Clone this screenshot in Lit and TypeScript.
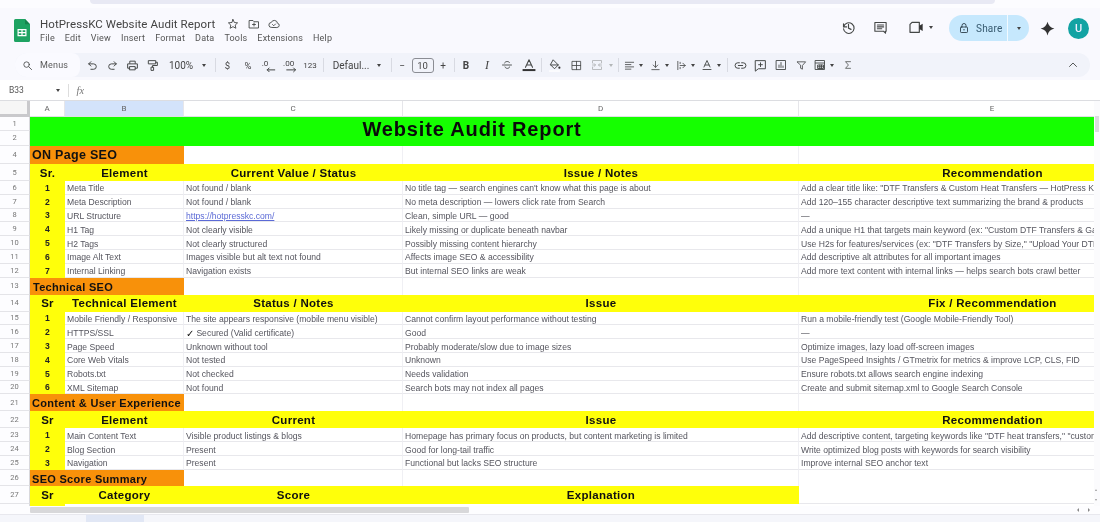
import { LitElement, html, css, svg, nothing } from "lit";
import { customElement } from "lit/decorators.js";

const ic = (body: unknown, size = 14, cls = "") =>
  html`<svg class="ic ${cls}" width=${size} height=${size} viewBox="0 0 24 24">${body}</svg>`;
const p = (d: string) => svg`<path d=${d}></path>`;
const caret = html`<span class="caret"></span>`;
const sep = html`<span class="sep"></span>`;

const icons = {
  search: svg`<circle cx="10" cy="10" r="6"></circle><path d="M15 15l6 6"></path>`,
  undo: p("M9 5L5 9l4 4M5 9h9a5 5 0 0 1 0 10H9"),
  redo: p("M15 5l4 4-4 4M19 9h-9a5 5 0 0 0 0 10h5"),
  print: p("M7 8V4h10v4M7 17H3V9h18v8h-4M7 14h10v6H7z"),
  paint: p("M5 3h13v6H5zM18 6h3v6h-9v3M10 15h4v6h-4z"),
  dec0: svg`<text x="1" y="13" class="svt">.0</text><path d="M22 19H10M13 16l-3 3 3 3" class="th"></path>`,
  dec00: svg`<text x="0" y="13" class="svt">.00</text><path d="M6 19h14M17 16l3 3-3 3" class="th"></path>`,
  strike: svg`<path d="M3 12h18M7 8c1-4 9-4 10-1M8 16c1 4 9 4 9 0"></path>`,
  textA: svg`<path d="M6 16L12 3l6 13M8 12h8"></path><rect x="1" y="19" width="22" height="3.4" class="solid"></rect>`,
  fill: svg`<path d="M10 2l9 9-7 7-7-7zM5 11h14"></path><circle cx="21" cy="16" r="2" class="solid"></circle><rect x="2" y="21" width="20" height="2.4" class="pale"></rect>`,
  borders: p("M3 3h18v18H3zM12 3v18M3 12h18"),
  merge: p("M3 8V3h18v5M3 16v5h18v-5M3 12h6M21 12h-6M6 9l3 3-3 3M18 9l-3 3 3 3"),
  align: p("M3 5h18M3 10h12M3 15h18M3 20h12"),
  valign: p("M4 21h16M12 3v13M7 11l5 5 5-5"),
  wrap: p("M4 3v18M9 12h11M15 7l5 5-5 5M9 5v3M9 16v3"),
  rotate: svg`<path d="M6 16l6-13 6 13M8 12h8M4 21h16"></path>`,
  link: p("M10 7H7a5 5 0 0 0 0 10h3M14 7h3a5 5 0 0 1 0 10h-3M8 12h8"),
  comment: p("M3 3h18v15H8l-5 4zM12 7v7M8.5 10.5h7"),
  chart: p("M3 3h18v18H3zM8 17v-5M12 17V7M16 17v-3"),
  filter: p("M3 4h18l-7 8v8l-4-2v-6z"),
  table: p("M3 3h18v18H3zM3 8h18M8 12h11v7H8zM8 15.5h11M11.5 12v7M15 12v7"),
  sigma: p("M18 4H6l7 8-7 8h12"),
  up: p("M5 15l7-7 7 7"),
  history: svg`<path d="M4 6v5h5M4.3 10.5A8.5 8.5 0 1 1 4 14"></path><path d="M12 7v6l4 2"></path>`,
  chat: p("M3 4h18v14h-1v3l-3-3H3zM7 8h10M7 11h10M7 14h7"),
  video: svg`<path d="M3 8l3-3h11v15H3z"></path><path d="M17 10l5-3v11l-5-3z" class="solid"></path>`,
  lock: svg`<rect x="5" y="10" width="14" height="11" rx="1.5"></rect><path d="M8 10V7a4 4 0 0 1 8 0v3"></path><circle cx="12" cy="15.5" r="1.4" class="solid"></circle>`,
  gemini: svg`<path class="solid" d="M12 1Q14 10 23 12Q14 14 12 23Q10 14 1 12Q10 10 12 1z"></path>`,
  star: p("M12 3l2.7 6 6.5.7-4.8 4.4 1.3 6.4L12 17.3l-5.7 3.2 1.3-6.4-4.8-4.4 6.5-.7z"),
  folder: p("M3 5h7l2 2.5h9V20H3zM12 10v6M9 13h6"),
  cloud: p("M7 19a5 5 0 0 1-.5-10A6.5 6.5 0 0 1 19 10.500a4.300 4.300 0 0 1-.5 8.500zM9 13l2.500 2.500L15 12"),
  fx: svg`<text x="1" y="18" class="fxt">fx</text>`,
};

type Item = [number, number, unknown, string?];
const toolbarItems: Item[] = [
  [92, 16, ic(icons.undo, 13)],
  [112, 16, ic(icons.redo, 13)],
  [132.5, 16, ic(icons.print, 13)],
  [152, 16, ic(icons.paint, 13)],
  [181, 26, "100%", "lbl"],
  [204, 8, caret],
  [215.5, 3, sep],
  [227.5, 14, "$", "sm"],
  [248, 14, "%", "sm"],
  [268, 15, ic(icons.dec0, 15)],
  [290, 15, ic(icons.dec00, 15)],
  [310, 16, "123", "xs"],
  [323, 3, sep],
  [351, 38, "Defaul...", "lbl"],
  [379, 8, caret],
  [391.5, 3, sep],
  [402, 8, "−", "lbl"],
  [422.5, 22, html`<span class="fs">10</span>`],
  [443, 12, "+", "lbl"],
  [454, 3, sep],
  [466, 12, html`<b>B</b>`, "lbl"],
  [487, 12, html`<i class="it">I</i>`, "lbl"],
  [507, 14, ic(icons.strike, 12)],
  [528.500, 15, ic(icons.textA, 14)],
  [541.5, 3, sep],
  [554, 14, ic(icons.fill, 13)],
  [576, 14, ic(icons.borders, 11)],
  [597, 14, ic(icons.merge, 12, "dim")],
  [611, 8, html`<span class="caret dimc"></span>`],
  [618, 3, sep],
  [629, 14, ic(icons.align, 11)],
  [641, 8, caret],
  [655, 14, ic(icons.valign, 11)],
  [667, 8, caret],
  [681, 14, ic(icons.wrap, 11)],
  [693, 8, caret],
  [707, 14, ic(icons.rotate, 12)],
  [719, 8, caret],
  [727.5, 3, sep],
  [740, 14, ic(icons.link, 13)],
  [760, 14, ic(icons.comment, 13)],
  [781, 14, ic(icons.chart, 12)],
  [801, 12, ic(icons.filter, 11)],
  [820, 14, ic(icons.table, 12)],
  [832, 8, caret],
  [848, 12, ic(icons.sigma, 10)],
  [1073, 14, ic(icons.up, 12)],
];

const rightItems: Item[] = [
  [848.5, 16, ic(icons.history, 15)],
  [880, 16, ic(icons.chat, 15)],
  [916, 18, ic(icons.video, 16)],
  [931, 8, caret],
];

// Lays items out in flow, each margin being the distance from the previous item.
const place = (items: Item[], startX: number) => {
  let right = startX;
  return items.map(([cx, w, body, cls]) => {
    const left = cx - w / 2;
    const style = `margin-left:${left - right}px;width:${w}px`;
    right = left + w;
    return html`<span class="slot ${cls ?? ""}" style=${style}>${body}</span>`;
  });
};

type Row =
  | { t: "title"; n: number; text: string }
  | { t: "blank"; n: number }
  | { t: "sec"; n: number; text: string; cls: string }
  | { t: "head"; n: number; cells: string[]; noE?: boolean }
  | { t: "data"; n: number; cells: string[]; link?: boolean };

const d = (n: number, cells: string[], link = false): Row => ({ t: "data", n, cells, link });
const h = (n: number, cells: string[], noE = false): Row => ({ t: "head", n, cells, noE });

const rows: Row[] = [
  { t: "title", n: 1, text: "Website Audit Report" },
  { t: "blank", n: 2 },
  { t: "sec", n: 4, text: "ON Page SEO", cls: "s-on" },
  h(5, ["Sr.", "Element", "Current Value / Status", "Issue / Notes", "Recommendation"]),
  d(6, ["1", "Meta Title", "Not found / blank", "No title tag — search engines can't know what this page is about", 'Add a clear title like: "DTF Transfers & Custom Heat Transfers — HotPress KC"']),
  d(7, ["2", "Meta Description", "Not found / blank", "No meta description — lowers click rate from Search", "Add 120–155 character descriptive text summarizing the brand & products"]),
  d(8, ["3", "URL Structure", "https://hotpresskc.com/", "Clean, simple URL — good", "—"], true),
  d(9, ["4", "H1 Tag", "Not clearly visible", "Likely missing or duplicate beneath navbar", 'Add a unique H1 that targets main keyword (ex: "Custom DTF Transfers & Gang Sheets")']),
  d(10, ["5", "H2 Tags", "Not clearly structured", "Possibly missing content hierarchy", 'Use H2s for features/services (ex: "DTF Transfers by Size," "Upload Your DTF Design")']),
  d(11, ["6", "Image Alt Text", "Images visible but alt text not found", "Affects image SEO & accessibility", "Add descriptive alt attributes for all important images"]),
  d(12, ["7", "Internal Linking", "Navigation exists", "But internal SEO links are weak", "Add more text content with internal links — helps search bots crawl better"]),
  { t: "sec", n: 13, text: "Technical SEO", cls: "s-tech" },
  h(14, ["Sr", "Technical Element", "Status / Notes", "Issue", "Fix / Recommendation"]),
  d(15, ["1", "Mobile Friendly / Responsive", "The site appears responsive (mobile menu visible)", "Cannot confirm layout performance without testing", "Run a mobile-friendly test (Google Mobile-Friendly Tool)"]),
  d(16, ["2", "HTTPS/SSL", "✓ Secured (Valid certificate)", "Good", "—"]),
  d(17, ["3", "Page Speed", "Unknown without tool", "Probably moderate/slow due to image sizes", "Optimize images, lazy load off-screen images"]),
  d(18, ["4", "Core Web Vitals", "Not tested", "Unknown", "Use PageSpeed Insights / GTmetrix for metrics & improve LCP, CLS, FID"]),
  d(19, ["5", "Robots.txt", "Not checked", "Needs validation", "Ensure robots.txt allows search engine indexing"]),
  d(20, ["6", "XML Sitemap", "Not found", "Search bots may not index all pages", "Create and submit sitemap.xml to Google Search Console"]),
  { t: "sec", n: 21, text: "Content & User Experience", cls: "s-con" },
  h(22, ["Sr", "Element", "Current", "Issue", "Recommendation"]),
  d(23, ["1", "Main Content Text", "Visible product listings & blogs", "Homepage has primary focus on products, but content marketing is limited", 'Add descriptive content, targeting keywords like "DTF heat transfers," "custom transfers"']),
  d(24, ["2", "Blog Section", "Present", "Good for long-tail traffic", "Write optimized blog posts with keywords for search visibility"]),
  d(25, ["3", "Navigation", "Present", "Functional but lacks SEO structure", "Improve internal SEO anchor text"]),
  { t: "sec", n: 26, text: "SEO Score Summary", cls: "s-score" },
  h(27, ["Sr", "Category", "Score", "Explanation"], true),
];

@customElement("app-root")
export class AppRoot extends LitElement {
  static styles = css`
    :host { display: block; width: 1100px; height: 522px; overflow: hidden; position: relative; background: #fff; font-family: "Liberation Sans", Arial, sans-serif; filter: blur(0.3px); }
    .ic { fill: none; stroke: #444746; stroke-width: 1.8; stroke-linecap: round; stroke-linejoin: round; display: block; }
    .ic .solid { fill: #333; stroke: none; }
    .ic .pale { fill: #fff; stroke: none; }
    .ic .th { stroke-width: 1.6; }
    .ic .svt { font: 13px Roboto, sans-serif; fill: #444; stroke: none; }
    .ic .fxt { font: italic 19px "Liberation Serif", serif; fill: #777; stroke: none; }
    .ic.dim { stroke: #b3b6b8; }

    .strip { height: 8px; background: #fcfcff; padding-left: 90px; box-sizing: border-box; }
    .strip i { display: block; width: 905px; height: 4px; background: #e8e9f4; border-radius: 0 0 8px 8px; }

    .top { height: 45px; background: #f9f9fe; display: flex; align-items: flex-start; padding-left: 14px; box-sizing: border-box; position: relative; }
    .logo { margin-top: 11px; display: block; }
    .titles { margin-left: 10px; font-family: Roboto, sans-serif; color: #444; }
    .doc { display: flex; align-items: center; height: 16px; margin-top: 8px; font-size: 11.500px; letter-spacing: .08px; color: #444; }
    .doc .ic { margin-left: 8.500px; }
    .doc .ic:first-of-type { margin-left: 12px; }
    .menu { display: flex; font-size: 9px; height: 13px; line-height: 13px; color: #555; gap: 10px; letter-spacing: .18px; }
    .right { display: flex; align-items: center; position: absolute; left: 0; top: 8px; height: 22px; }

    .slot { display: flex; align-items: center; justify-content: center; flex: none; color: #444; }
    .lbl { font: 10px Roboto, sans-serif; white-space: nowrap; }
    .sm { font: 9.5px Roboto, sans-serif; }
    .xs { font: 8px Roboto, sans-serif; }
    .it { font-family: "Liberation Serif", serif; font-size: 12px; }
    .caret { width: 0; height: 0; border: 2.5px solid transparent; border-top: 3px solid #444; border-bottom: 0; }
    .dimc { border-top-color: #b3b6b8; }
    .sep { width: 1px; height: 14px; background: #d8dae2; }
    .fs { width: 22px; height: 15px; box-sizing: border-box; border: 1px solid #8b8d94; border-radius: 3px; font: 9.5px/13px Roboto, sans-serif; text-align: center; color: #444; }

    .share { position: absolute; left: 949px; top: 7px; width: 80px; height: 26px; border-radius: 13px; background: #c6e8fd; display: flex; align-items: center; font: 10px Roboto, sans-serif; color: #375a70; letter-spacing: .2px; }
    .share .ic { margin: 0 6px 0 9px; stroke: #2c3e4b; }
    .share .ic .solid { fill: #2c3e4b; }
    .share .div { width: 1px; height: 26px; background: #f2faff; margin-left: 5px; }
    .share .caret { margin-left: 9px; }
    .gem { position: absolute; left: 1040px; top: 13px; }
    .avatar { position: absolute; left: 1068px; top: 10px; width: 21px; height: 21px; border-radius: 50%; background: #12a3a3; color: #eef; font: 500 11px/21px Roboto, sans-serif; text-align: center; }

    .toolwrap { height: 27px; background: #f9f9fe; }
    .toolbar { width: 1075px; height: 24px; margin-left: 15px; background: #f1f3fa; border-radius: 12px; display: flex; align-items: center; position: relative; }
    .menus { width: 65px; height: 24px; flex: none; background: #fafaff; border-radius: 12px 8px 8px 12px; display: flex; align-items: center; padding-left: 7px; box-sizing: border-box; gap: 7px; font: 9px Roboto, sans-serif; color: #5a5a5a; letter-spacing: .2px; }

    .formula { height: 20px; background: #fff; border-bottom: 1px solid #dcdde1; display: flex; align-items: center; box-sizing: content-box; font: 8.5px Roboto, sans-serif; color: #555; padding-left: 9px; }
    .formula .nm { width: 47px; }
    .formula .vl { width: 1px; height: 13px; background: #ddd; margin: 0 7px 0 8px; }

    .body { display: flex; height: 405px; }
    .sheet { width: 1094px; flex: none; height: 405px; overflow: hidden; }
    .grid { display: grid; width: 1186px; grid-template-columns: 30px 35px 119px 219px 396px 387px; grid-template-rows: 15.5px 14.5px 14.5px 18.5px 17px repeat(7, 13.8px) 17px 17px repeat(6, 13.8px) 17px 17px repeat(3, 13.8px) 16.5px 18px 4px; }
    .ch { display: flex; align-items: center; justify-content: center; font: 8px Roboto, sans-serif; color: #666; border-right: 1px solid #e6e6ea; border-bottom: 1px solid #e0e0e4; box-sizing: border-box; overflow: hidden; }
    .corner { background: #f6f6f6; border-right: 3px solid #c9c9cc; border-bottom: 3px solid #c9c9cc; box-sizing: border-box; }
    .ch.sel { background: #d3e3fb; }
    .rn { display: flex; align-items: center; justify-content: center; font: 7.5px Roboto, sans-serif; color: #777; background: #fdfdff; border-bottom: 1px solid #e4e4e8; border-right: 1px solid #d8d8dc; box-sizing: border-box; overflow: hidden; }
    .c { font-size: 8.600px; line-height: 9px; color: #55555e; white-space: nowrap; overflow: hidden; padding: 3px 2px 0 2px; border-right: 1px solid #f0f0f4; border-bottom: 1px solid #e8e8ec; box-sizing: border-box; display: flex; align-items: center; }
    .c a { color: #5b6ad6; text-decoration: underline; }
    .chk { color: #111; font-size: 9.5px; }
    .num { background: #ffff0a; color: #222; font-weight: 700; justify-content: center; border-right: none; border-bottom: none; padding: 1px 0 0; }
    .yl { background: #ffff0a; color: #111; font-weight: 700; font-size: 11.500px; line-height: 13px; letter-spacing: .28px; justify-content: center; border: none; padding: 1px 0 0; }
    .title { grid-column: span 5; grid-row: span 2; background: #15ff00; color: #0a0a0a; font-weight: 700; font-size: 20px; line-height: 24px; letter-spacing: .85px; justify-content: center; border: none; padding: 0 272px 4px 0; }
    .sec { grid-column: span 2; background: #f8910a; color: #111; font-weight: 700; line-height: 14px; border: none; padding: 1px 0 0 2px; }
    .s-on { font-size: 12.500px; letter-spacing: .3px; }
    .s-tech { font-size: 11px; letter-spacing: .3px; padding-left: 3px; }
    .s-con { font-size: 11px; letter-spacing: .28px; }
    .s-score { font-size: 11px; letter-spacing: .3px; }
    .blank { border-bottom: none; }
    .stub { background: #ffff0a; }

    .vbar { width: 6px; height: 405px; background: #fbfbfd; position: relative; }
    .vbar i { display: block; width: 4px; height: 16px; margin: 15px 0 0 1px; background: #dadce0; }
    .vbar b { position: absolute; left: 1px; width: 0; height: 0; border: 1.500px solid transparent; }
    .vbar .a1 { top: 388px; border-bottom: 2px solid #999; border-top: 0; }
    .vbar .a2 { top: 398px; border-top: 2px solid #999; border-bottom: 0; }

    .hbar { height: 8px; background: #fdfdff; padding-left: 30px; position: relative; border-bottom: 1px solid #e8e8ee; box-sizing: content-box; }
    .hbar i { display: block; width: 439px; height: 6px; position: relative; top: 1px; background: #d8d8da; border-radius: 1px; }
    .hbar b { position: absolute; top: 2px; width: 0; height: 0; border: 2px solid transparent; }
    .hbar .l { left: 1077px; border-right: 2.500px solid #888; border-left: 0; }
    .hbar .r { left: 1088px; border-left: 2.500px solid #888; border-right: 0; }
    .foot { height: 8px; background: #f5f6fb; padding-left: 86px; }
    .foot i { display: block; width: 58px; height: 8px; background: #e1e7f5; }
  `;

  private dataCell(text: string, isLink: boolean) {
    if (isLink) return html`<div class="c"><a>${text}</a></div>`;
    if (text.startsWith("✓ ")) {
      return html`<div class="c"><span class="chk">✓</span>&nbsp;${text.slice(2)}</div>`;
    }
    return html`<div class="c">${text}</div>`;
  }

  private renderRow(r: Row) {
    const rn = html`<div class="rn">${r.n}</div>`;
    if (r.t === "title") return html`${rn}<div class="c title">${r.text}</div>`;
    if (r.t === "blank") return rn;
    if (r.t === "sec") {
      return html`${rn}<div class="c sec ${r.cls}">${r.text}</div>
        <div class="c blank"></div><div class="c blank"></div><div class="c blank"></div>`;
    }
    if (r.t === "head") {
      return html`${rn}${r.cells.map((c) => html`<div class="c yl">${c}</div>`)}
        ${r.noE ? html`<div class="c"></div>` : nothing}`;
    }
    return html`${rn}<div class="c num">${r.cells[0]}</div>
      ${r.cells.slice(1).map((c, i) => this.dataCell(c, !!r.link && i === 1))}`;
  }

  render() {
    return html`
      <div class="strip"><i></i></div>
      <div class="top">
        <svg class="logo" width="16" height="23" viewBox="0 0 16 22" preserveAspectRatio="none">
          <path fill="#1ea362" d="M1.500 0H11l5 5v15.500a1.500 1.500 0 0 1-1.500 1.500h-13A1.500 1.500 0 0 1 0 20.500v-19A1.500 1.500 0 0 1 1.500 0z"></path>
          <path fill="#17834d" d="M11 0l5 5h-5z"></path>
          <path fill="#fff" d="M3.500 9.500h9v7h-9zM4.700 10.700v1.700h2.700v-1.700zm3.900 0v1.700h2.700v-1.700zM4.700 13.600v1.700h2.700v-1.700zm3.900 0v1.700h2.700v-1.700z"></path>
        </svg>
        <div class="titles">
          <div class="doc">
            <span>HotPressKC Website Audit Report</span>
            ${ic(icons.star, 12)}${ic(icons.folder, 12)}${ic(icons.cloud, 12)}
          </div>
          <div class="menu">
            ${["File", "Edit", "View", "Insert", "Format", "Data", "Tools", "Extensions", "Help"].map((m) => html`<span>${m}</span>`)}
          </div>
        </div>
        <div class="right">${place(rightItems, 0)}</div>
        <div class="share">
          ${ic(icons.lock, 12)}<span>Share</span><span class="div"></span>${caret}
        </div>
        <div class="gem">${ic(icons.gemini, 15)}</div>
        <div class="avatar">U</div>
      </div>
      <div class="toolwrap">
        <div class="toolbar">
          <div class="menus">${ic(icons.search, 11)}<span>Menus</span></div>
          ${place(toolbarItems, 80)}
        </div>
      </div>
      <div class="formula">
        <span class="nm">B33</span>${caret}<span class="vl"></span>${ic(icons.fx, 13)}
      </div>
      <div class="body">
        <div class="sheet">
          <div class="grid">
            <div class="corner"></div>
            <div class="ch">A</div><div class="ch sel">B</div><div class="ch">C</div><div class="ch">D</div><div class="ch">E</div>
            ${rows.map((r) => this.renderRow(r))}
            <div class="rn"></div><div class="stub"></div>
          </div>
        </div>
        <div class="vbar"><i></i><b class="a1"></b><b class="a2"></b></div>
      </div>
      <div class="hbar"><i></i><b class="l"></b><b class="r"></b></div>
      <div class="foot"><i></i></div>
    `;
  }
}
